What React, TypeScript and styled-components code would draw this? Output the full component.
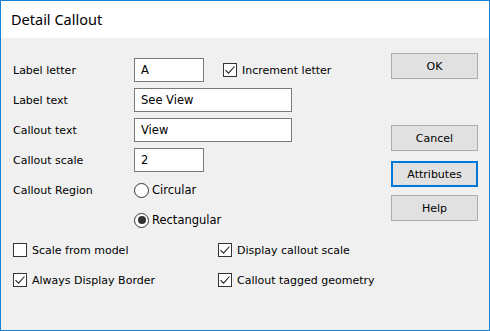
import React from 'react'
import styled, { createGlobalStyle } from 'styled-components'

const GlobalStyle = createGlobalStyle`
  html, body {
    margin: 0;
    padding: 0;
    background: #f0f0f0;
  }
  * {
    box-sizing: border-box;
  }
`

const Window = styled.div`
  width: 490px;
  height: 331px;
  border: 1px solid #1883d7;
  display: flex;
  flex-direction: column;
  background: #f0f0f0;
  font-family: 'DejaVu Sans', Tahoma, sans-serif;
  font-size: 11px;
  color: #000;
`

const TitleBar = styled.div`
  height: 37px;
  background: #fff;
  display: flex;
  align-items: center;
  padding-left: 10px;
  padding-bottom: 1px;
  font-family: 'Noto Sans', 'Open Sans', sans-serif;
  font-size: 14.5px;
  color: #000;
`

const Body = styled.div`
  flex: 1;
  display: flex;
`

const Form = styled.div`
  flex: 1;
  padding: 17px 0 0 12px;
  display: flex;
  flex-direction: column;
`

const Row = styled.div`
  height: 30px;
  display: grid;
  grid-template-columns: ${(p: { $cols?: string }) => p.$cols || '121px auto'};
  align-items: center;
`

const Label = styled.span`
  white-space: nowrap;
`

const Controls = styled.div`
  display: flex;
  align-items: center;
  gap: 19px;
`

const TextBox = styled.div<{ $width: number }>`
  width: ${(p) => p.$width}px;
  height: 24px;
  background: #fff;
  border: 1px solid #7a7a7a;
  display: flex;
  align-items: center;
  padding-left: 6px;
  padding-bottom: 1px;
  font-size: 11.5px;
`

const Check = styled.label`
  display: flex;
  align-items: center;
  gap: 5px;
  white-space: nowrap;
`

const Box = styled.span`
  width: 14px;
  height: 14px;
  background: #fff;
  border: 1px solid #333;
  display: flex;
  align-items: center;
  justify-content: center;
`

const Circle = styled.span<{ $on?: boolean }>`
  width: 15px;
  height: 15px;
  border-radius: 50%;
  background: #fff;
  border: 1px solid #333;
  display: flex;
  align-items: center;
  justify-content: center;
  &::after {
    content: '';
    width: 8px;
    height: 8px;
    border-radius: 50%;
    background: ${(p) => (p.$on ? '#333' : 'transparent')};
  }
`

const Radio = styled.label`
  display: flex;
  align-items: center;
  gap: 3px;
  white-space: nowrap;
  font-size: 11.5px;
`

const ButtonColumn = styled.div`
  width: 87px;
  margin-right: 11px;
  display: flex;
  flex-direction: column;
`

const Button = styled.div<{ $top: number; $focus?: boolean }>`
  margin-top: ${(p) => p.$top}px;
  height: 26px;
  background: #e1e1e1;
  border: ${(p) => (p.$focus ? '2px solid #0078d7' : '1px solid #adadad')};
  display: flex;
  align-items: center;
  justify-content: center;
  font-size: 11px;
`

const Tick = () => (
  <svg width="12" height="12" viewBox="0 0 12 12">
    <path d="M1.5 6.2 L4.5 9.2 L10.5 2.5" fill="none" stroke="#222" strokeWidth="1.1" />
  </svg>
)

const CheckBox = ({ checked, label }: { checked?: boolean; label: string }) => (
  <Check>
    <Box>{checked && <Tick />}</Box>
    <Label>{label}</Label>
  </Check>
)

export default function App() {
  return (
    <>
      <GlobalStyle />
      <Window>
        <TitleBar>Detail Callout</TitleBar>
        <Body>
          <Form>
            <Row>
              <Label>Label letter</Label>
              <Controls>
                <TextBox $width={70}>A</TextBox>
                <CheckBox checked label="Increment letter" />
              </Controls>
            </Row>
            <Row>
              <Label>Label text</Label>
              <TextBox $width={158}>See View</TextBox>
            </Row>
            <Row>
              <Label>Callout text</Label>
              <TextBox $width={158}>View</TextBox>
            </Row>
            <Row>
              <Label>Callout scale</Label>
              <TextBox $width={70}>2</TextBox>
            </Row>
            <Row>
              <Label>Callout Region</Label>
              <Radio>
                <Circle />
                Circular
              </Radio>
            </Row>
            <Row>
              <span />
              <Radio>
                <Circle $on />
                Rectangular
              </Radio>
            </Row>
            <Row $cols="205px auto">
              <CheckBox label="Scale from model" />
              <CheckBox checked label="Display callout scale" />
            </Row>
            <Row $cols="205px auto">
              <CheckBox checked label="Always Display Border" />
              <CheckBox checked label="Callout tagged geometry" />
            </Row>
          </Form>
          <ButtonColumn>
            <Button $top={15}>OK</Button>
            <Button $top={46}>Cancel</Button>
            <Button $top={10} $focus>Attributes</Button>
            <Button $top={8}>Help</Button>
          </ButtonColumn>
        </Body>
      </Window>
    </>
  )
}
